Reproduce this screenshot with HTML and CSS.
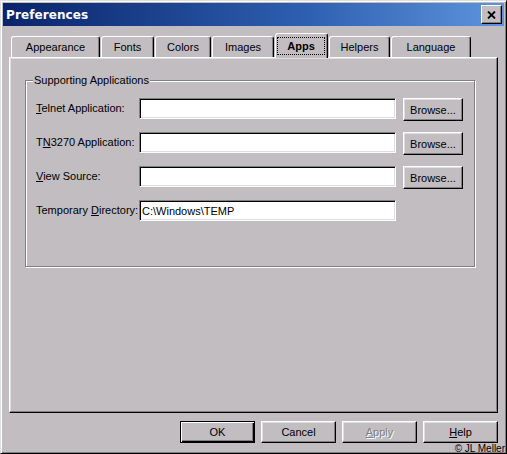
FILE: index.html
```html
<!DOCTYPE html>
<html lang="en">
<head>
    <meta charset="UTF-8">
    <title>Preferences</title>
    <link rel="stylesheet" href="styles.css">
</head>
<body>
    <div class="window">
        <div class="titlebar">
            <span class="title">Preferences</span>
            <button class="close-btn">
                <svg width="9" height="8" viewBox="0 0 9 8">
                    <path d="M1 0.5 L8 7.5 M8 0.5 L1 7.5" stroke="#000" stroke-width="1.8" fill="none"/>
                </svg>
            </button>
        </div>

        <div class="tabs">
            <div class="tab tab-appearance">Appearance</div>
            <div class="tab tab-fonts">Fonts</div>
            <div class="tab tab-colors">Colors</div>
            <div class="tab tab-images">Images</div>
            <div class="tab tab-apps active"><span>Apps</span></div>
            <div class="tab tab-helpers">Helpers</div>
            <div class="tab tab-language">Language</div>
        </div>

        <div class="panel">
            <fieldset class="group">
                <legend>Supporting Applications</legend>
                <div class="rows">
                    <label><u>T</u>elnet Application:</label>
                    <input type="text" class="field">
                    <button class="btn">Browse...</button>

                    <label>T<u>N</u>3270 Application:</label>
                    <input type="text" class="field">
                    <button class="btn">Browse...</button>

                    <label><u>V</u>iew Source:</label>
                    <input type="text" class="field">
                    <button class="btn">Browse...</button>

                    <label>Temporary <u>D</u>irectory:</label>
                    <input type="text" class="field" value="C:\Windows\TEMP">
                </div>
            </fieldset>
        </div>

        <div class="actions">
            <button class="btn action default">OK</button>
            <button class="btn action">Cancel</button>
            <button class="btn action disabled"><u>A</u>pply</button>
            <button class="btn action"><u>H</u>elp</button>
        </div>

        <span class="credit">© JL Meller</span>
    </div>
</body>
</html>
```

FILE: styles.css
```css
* {
    box-sizing: border-box;
}
html, body {
    margin: 0;
    padding: 0;
}
body {
    background: #c1bdc1;
    font-family: "Liberation Sans", Arial, sans-serif;
    font-size: 11px;
    color: #000;
}
.window {
    position: relative;
    width: 507px;
    height: 454px;
    padding: 2px;
    background: #c1bdc1;
    border-top: 1px solid #dfdfdf;
    border-left: 1px solid #dfdfdf;
    border-right: 1px solid #000;
    border-bottom: 1px solid #000;
    box-shadow: inset 1px 1px 0 #fff, inset -1px -1px 0 #808080;
    display: flex;
    flex-direction: column;
}

/* title bar */
.titlebar {
    height: 23px;
    display: flex;
    align-items: center;
    justify-content: space-between;
    background: linear-gradient(to right, #0a246a, #2d5fb0 60%, #5e94dc);
}
.title {
    padding-left: 3px;
    color: #fff;
    font-family: "DejaVu Sans", Verdana, sans-serif;
    font-weight: bold;
    font-size: 12px;
    letter-spacing: 0.1px;
}
.close-btn {
    width: 21px;
    height: 19px;
    margin-right: 2px;
    padding: 0;
    display: flex;
    align-items: center;
    justify-content: center;
    background: #c1bdc1;
    border-top: 1px solid #fff;
    border-left: 1px solid #fff;
    border-right: 1px solid #000;
    border-bottom: 1px solid #000;
    box-shadow: inset -1px -1px 0 #808080;
}

/* tabs */
.tabs {
    display: flex;
    align-items: flex-end;
    height: 24px;
    margin-top: 7px;
    padding-left: 8px;
}
.tab {
    height: 21px;
    line-height: 20px;
    text-align: center;
    background: #c1bdc1;
    border-top: 1px solid #fff;
    border-left: 1px solid #fff;
    border-right: 1px solid #000;
    border-radius: 3px 3px 0 0;
    box-shadow: inset -1px 0 0 #808080;
    margin-right: 1px;
}
.tab-appearance { width: 89px; }
.tab-fonts { width: 53px; }
.tab-colors { width: 56px; }
.tab-images { width: 62px; }
.tab-apps { width: 53px; }
.tab-helpers { width: 61px; }
.tab-language { width: 80px; }
.tab.active {
    position: relative;
    z-index: 1;
    height: 25px;
    margin-bottom: -1px;
    font-weight: bold;
    padding: 3px 2px 0 1px;
    line-height: 16px;
}
.tab.active span {
    display: block;
    border: 1px dotted #000;
}

/* panel */
.panel {
    height: 356px;
    margin: 0 6px;
    padding: 16px 0 0 15px;
    border-top: 1px solid #fff;
    border-left: 1px solid #fff;
    border-right: 1px solid #000;
    border-bottom: 1px solid #000;
    box-shadow: inset -1px -1px 0 #808080, inset 1px 1px 0 #dfdfdf;
}
.group {
    width: 450px;
    margin: 0;
    padding: 11px 10px 43px 10px;
    border: 1px solid #808080;
    box-shadow: 1px 1px 0 #fff, inset 1px 1px 0 #fff;
}
.group legend {
    margin-left: -3px;
    padding: 0 1px;
    line-height: 13px;
    background: #c1bdc1;
}
.rows {
    display: grid;
    grid-template-columns: 96px 257px 60px;
    grid-auto-rows: 23px;
    column-gap: 7px;
    row-gap: 11px;
    align-items: start;
}
.rows label {
    line-height: 21px;
    white-space: nowrap;
}
.field {
    width: 100%;
    height: 21px;
    margin: 0;
    padding: 0 2px;
    font-family: "Liberation Sans", Arial, sans-serif;
    font-size: 11px;
    color: #000;
    background: #fff;
    border-top: 1px solid #808080;
    border-left: 1px solid #808080;
    border-right: 1px solid #fff;
    border-bottom: 1px solid #fff;
    box-shadow: inset 1px 1px 0 #000, inset -1px -1px 0 #dfdfdf;
    outline: none;
}

/* buttons */
.btn {
    height: 23px;
    margin: 0;
    padding: 0;
    font-family: "Liberation Sans", Arial, sans-serif;
    font-size: 11px;
    color: #000;
    background: #c1bdc1;
    border-top: 1px solid #fff;
    border-left: 1px solid #fff;
    border-right: 1px solid #000;
    border-bottom: 1px solid #000;
    box-shadow: inset -1px -1px 0 #808080, inset 1px 1px 0 #dfdfdf;
}
.actions {
    display: flex;
    justify-content: flex-end;
    gap: 6px;
    margin-top: 8px;
    padding-right: 6px;
}
.action {
    width: 75px;
    height: 22px;
}
.action.default {
    border: 1px solid #000;
    box-shadow: inset 1px 1px 0 #fff, inset -1px -1px 0 #000, inset -2px -2px 0 #808080;
}
.action.disabled {
    color: #808080;
    text-shadow: 1px 1px 0 #fff;
}

.credit {
    position: absolute;
    right: 1px;
    bottom: -1px;
    font-size: 10px;
    line-height: 11px;
}
```
